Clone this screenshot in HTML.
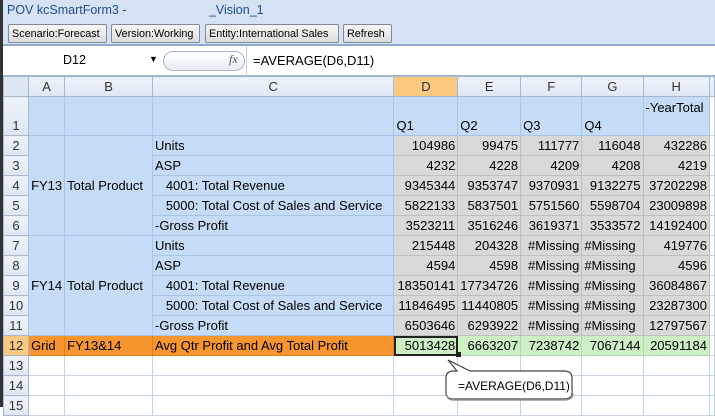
<!DOCTYPE html>
<html><head><style>
body{margin:0;width:715px;height:407px;overflow:hidden;background:#fff;font-family:"Liberation Sans",sans-serif;position:relative}
.a{position:absolute}
#title{left:0;top:0;width:715px;height:20px;background:#d5e2f3;color:#1f4e8c;font-size:12.5px;line-height:20px;padding-left:7px;box-sizing:border-box}
#tb{left:0;top:20px;width:715px;height:26px;background:#d5e2f3;border-bottom:2px solid #90aacb;box-sizing:border-box}
.btn{position:absolute;top:4px;height:19px;border:1px solid #7f8a99;border-radius:2px;background:linear-gradient(#f7f7f7,#dcdcdc);font-size:10.8px;line-height:18px;padding:0 3px;box-sizing:border-box;white-space:nowrap;overflow:hidden}
#fb{left:0;top:46px;width:715px;height:30px;background:#fff;border-bottom:1px solid #9fb3cd;box-sizing:border-box}
table{position:absolute;left:3px;top:76px;border-collapse:collapse;table-layout:fixed;font-size:13px}
td{border:1px solid #c8d3e2;height:19px;padding:0 2px;white-space:nowrap;overflow:hidden;line-height:19px}
td.h{background:linear-gradient(#eef3fa,#dde7f4);text-align:center;color:#333;border-color:#a9b8cc}
td.hs{background:#f8c97e}
.b{background:#c5dcf7;border-color:#a9c4e6}
.g{background:#d9d9d9;border-color:#bfbfbf;text-align:right}
.o{background:#f7962e;border-color:#e07f20}
.gr{background:#ccefc4;border-color:#b5d9ad;text-align:right}
</style></head><body>
<div class="a" style="left:0;top:0;width:3px;height:407px;background:#333;z-index:5"></div>
<div class="a" id="title">POV kcSmartForm3 - <span style="margin-left:79px">_Vision_1</span></div>
<div class="a" id="tb">
<div class="btn" style="left:8px;width:99px">Scenario:Forecast</div>
<div class="btn" style="left:111px;width:89px">Version:Working</div>
<div class="btn" style="left:205px;width:134px">Entity:International Sales</div>
<div class="btn" style="left:343px;width:49px">Refresh</div>
</div>
<div class="a" id="fb">
<div class="a" style="left:63px;top:7px;font-size:12.5px">D12</div>
<div class="a" style="left:149px;top:8px;font-size:9px">▼</div>
<div class="a" style="left:163px;top:5px;width:80px;height:18px;border:1px solid #a9b8cc;border-radius:10px;background:linear-gradient(#fff,#e6ecf4)"></div>
<div class="a" style="left:229px;top:6px;font-family:'Liberation Serif',serif;font-style:italic;font-size:12px;color:#555">fx</div>
<div class="a" style="left:246px;top:0;width:1px;height:30px;background:#c5cfdc"></div>
<div class="a" style="left:253px;top:7px;font-size:13px">=AVERAGE(D6,D11)</div>
</div>
<table>
<colgroup><col style="width:26px"><col style="width:34px"><col style="width:89px"><col style="width:243px"><col style="width:64px"><col style="width:62px"><col style="width:62px"><col style="width:62px"><col style="width:67px"><col style="width:5px"></colgroup>
<tr><td class="h" style="background:#dde7f4"></td><td class="h">A</td><td class="h">B</td><td class="h">C</td><td class="h hs">D</td><td class="h">E</td><td class="h">F</td><td class="h">G</td><td class="h">H</td><td class="h"></td></tr>
<tr><td class="h" style="height:38px;vertical-align:bottom">1</td><td class="b"></td><td class="b"></td><td class="b"></td><td class="b" style="vertical-align:bottom">Q1</td><td class="b" style="vertical-align:bottom">Q2</td><td class="b" style="vertical-align:bottom">Q3</td><td class="b" style="vertical-align:bottom">Q4</td><td class="b" style="vertical-align:top;padding-top:1px">-YearTotal</td><td></td></tr>
<tr><td class="h">2</td><td class="b" rowspan="5">FY13</td><td class="b" rowspan="5">Total Product</td><td class="b">Units</td><td class="g">104986</td><td class="g">99475</td><td class="g">111777</td><td class="g">116048</td><td class="g">432286</td><td></td></tr>
<tr><td class="h">3</td><td class="b">ASP</td><td class="g">4232</td><td class="g">4228</td><td class="g">4209</td><td class="g">4208</td><td class="g">4219</td><td></td></tr>
<tr><td class="h">4</td><td class="b">&nbsp;&nbsp;&nbsp;4001: Total Revenue</td><td class="g">9345344</td><td class="g">9353747</td><td class="g">9370931</td><td class="g">9132275</td><td class="g">37202298</td><td></td></tr>
<tr><td class="h">5</td><td class="b">&nbsp;&nbsp;&nbsp;5000: Total Cost of Sales and Service</td><td class="g">5822133</td><td class="g">5837501</td><td class="g">5751560</td><td class="g">5598704</td><td class="g">23009898</td><td></td></tr>
<tr><td class="h">6</td><td class="b">-Gross Profit</td><td class="g">3523211</td><td class="g">3516246</td><td class="g">3619371</td><td class="g">3533572</td><td class="g">14192400</td><td></td></tr>
<tr><td class="h">7</td><td class="b" rowspan="5">FY14</td><td class="b" rowspan="5">Total Product</td><td class="b">Units</td><td class="g">215448</td><td class="g">204328</td><td class="g">#Missing</td><td class="g" style="text-align:left">#Missing</td><td class="g">419776</td><td></td></tr>
<tr><td class="h">8</td><td class="b">ASP</td><td class="g">4594</td><td class="g">4598</td><td class="g">#Missing</td><td class="g" style="text-align:left">#Missing</td><td class="g">4596</td><td></td></tr>
<tr><td class="h">9</td><td class="b">&nbsp;&nbsp;&nbsp;4001: Total Revenue</td><td class="g">18350141</td><td class="g">17734726</td><td class="g">#Missing</td><td class="g" style="text-align:left">#Missing</td><td class="g">36084867</td><td></td></tr>
<tr><td class="h">10</td><td class="b">&nbsp;&nbsp;&nbsp;5000: Total Cost of Sales and Service</td><td class="g">11846495</td><td class="g">11440805</td><td class="g">#Missing</td><td class="g" style="text-align:left">#Missing</td><td class="g">23287300</td><td></td></tr>
<tr><td class="h">11</td><td class="b">-Gross Profit</td><td class="g">6503646</td><td class="g">6293922</td><td class="g">#Missing</td><td class="g" style="text-align:left">#Missing</td><td class="g">12797567</td><td></td></tr>
<tr><td class="h hs">12</td><td class="o">Grid</td><td class="o">FY13&amp;14</td><td class="o">Avg Qtr Profit and Avg Total Profit</td><td class="gr" style="outline:2px solid #222;outline-offset:-2px">5013428</td><td class="gr">6663207</td><td class="gr">7238742</td><td class="gr">7067144</td><td class="gr">20591184</td><td></td></tr>
<tr><td class="h">13</td><td></td><td></td><td></td><td></td><td></td><td></td><td></td><td></td><td></td></tr>
<tr><td class="h">14</td><td></td><td></td><td></td><td></td><td></td><td></td><td></td><td></td><td></td></tr>
<tr><td class="h">15</td><td></td><td></td><td></td><td></td><td></td><td></td><td></td><td></td><td></td></tr>
</table>
<div class="a" style="left:456px;top:352px;width:5px;height:5px;background:#222"></div>
<svg class="a" style="left:440px;top:355px" width="140" height="50">
<path d="M17 16 L8 5 L30 16 L124 16 Q132 16 132 23 L132 38 Q132 44 124 44 L14 44 Q6 44 6 38 L6 23 Q6 16 14 16 Z" fill="#fff" stroke="#444" stroke-width="1.2"/>
<path d="M7 40 Q7 45 14 45 L124 45 Q133 45 133 38" fill="none" stroke="#999" stroke-width="1.5"/>
</svg>
<div class="a" style="left:458px;top:379px;font-size:12px">=AVERAGE(D6,D11)</div>
</body></html>
